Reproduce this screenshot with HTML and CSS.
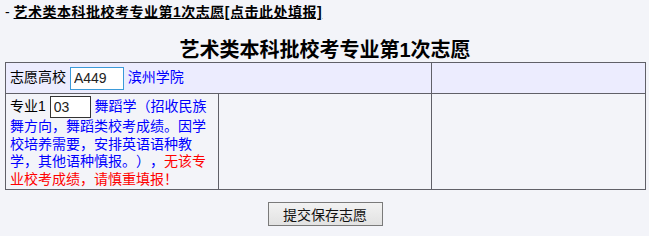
FILE: index.html
```html
<!DOCTYPE html>
<html lang="zh-CN">
<head>
    <meta charset="UTF-8">
    <title>艺术类本科批校考专业志愿</title>
    <link rel="stylesheet" href="styles.css">
</head>
<body>
    <div class="topline">- <a href="#" class="entry-link">艺术类本科批校考专业第1次志愿[点击此处填报]</a></div>

    <h2 class="title">艺术类本科批校考专业第1次志愿</h2>

    <table class="choice-table">
        <colgroup>
            <col class="col-a">
            <col class="col-b">
            <col class="col-c">
        </colgroup>
        <tr class="school-row">
            <td colspan="2">志愿高校 <input class="code-input focus" type="text" value="A449"> <span class="blue">滨州学院</span></td>
            <td></td>
        </tr>
        <tr class="major-row">
            <td>专业1 <input class="code-input" type="text" value="03"> <span class="blue">舞蹈学（招收民族舞方向，舞蹈类校考成绩。因学校培养需要，安排英语语种教学，其他语种慎报。），</span><span class="red">无该专业校考成绩，请慎重填报！</span></td>
            <td></td>
            <td></td>
        </tr>
    </table>

    <div class="actions">
        <button type="button">提交保存志愿</button>
    </div>
</body>
</html>
```

FILE: styles.css
```css
body {
    margin: 0;
    padding: 2px 4px 0 5px;
    background: #f3f4f9;
    color: #000;
    font-family: "Liberation Sans", "Noto Sans CJK SC", sans-serif;
    font-size: 14px;
    text-spacing-trim: space-all;
}
.topline {
    line-height: 20px;
}
.entry-link {
    color: #000;
    font-weight: bold;
    text-decoration: underline;
    letter-spacing: 0.5px;
}
.title {
    margin: 16px 0 0;
    font-size: 20px;
    line-height: 24px;
    text-align: center;
}
.choice-table {
    width: 640px;
    table-layout: fixed;
    border-collapse: collapse;
}
.col-a { width: 213px; }
.col-b { width: 213px; }
.col-c { width: 214px; }
.choice-table td {
    border: 1px solid #606068;
    padding: 3px 4px;
    line-height: 18px;
    vertical-align: middle;
}
.school-row td {
    background: #ececfe;
    height: 24px;
}
.major-row td {
    background: #f3f4f9;
    padding: 2px 4px 1px;
    line-height: 17.5px;
}
.code-input {
    box-sizing: border-box;
    font-family: "Liberation Sans", "Noto Sans CJK SC", sans-serif;
    font-size: 14px;
    color: #222;
    background: #fff;
    border: 1px solid #333;
    padding: 0 3px;
    margin: 0;
    vertical-align: middle;
}
.school-row .code-input {
    width: 54px;
    height: 23px;
}
.major-row .code-input {
    width: 41px;
    height: 22px;
}
.code-input.focus {
    border-color: #3b9ad9;
}
.blue { color: #0000ff; }
.red { color: #ff0000; }
.actions {
    margin-top: 12px;
    text-align: center;
}
.actions button {
    width: 115px;
    height: 24px;
    padding: 0;
    font-family: "Liberation Sans", "Noto Sans CJK SC", sans-serif;
    font-size: 14px;
    color: #111;
    background: linear-gradient(#f2f2f2, #e2e2e2);
    border: 1px solid #7a7a7a;
    border-radius: 0;
}
```
